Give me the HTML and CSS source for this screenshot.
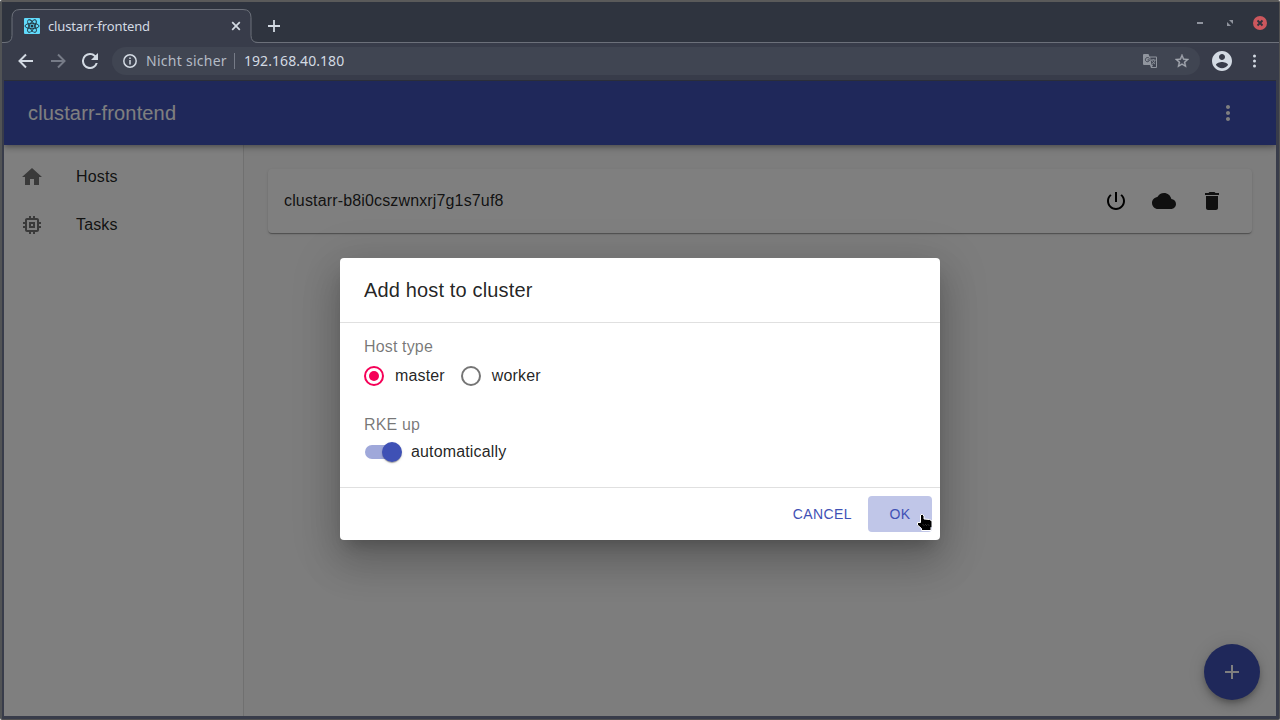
FILE: index.html
```html
<!DOCTYPE html>
<html lang="de">
<head>
<meta charset="utf-8">
<title>clustarr-frontend</title>
<link rel="stylesheet" href="styles.css">
</head>
<body>
<div class="window">
  <div class="tabstrip">
    <svg class="tab-shape" width="256" height="41" viewBox="0 0 256 41"><path d="M0 40.5h1q7 0 7-7V15.500q0-8 8-8h223q8 0 8 8V33.500q0 7 7 7h2V41H0z" fill="#383c4a"/><path d="M0 40.500h1q7 0 7-7V15.500q0-8 8-8h223q8 0 8 8V33.500q0 7 7 7h2" fill="none" stroke="#6c707a"/></svg>
    <div class="tab">
      <svg width="16" height="16" viewBox="0 0 16 16"><rect width="16" height="16" rx="1" fill="#61dafb"/><g fill="none" stroke="#20303a" stroke-width=".9"><ellipse cx="8" cy="8" rx="7" ry="2.700"/><ellipse cx="8" cy="8" rx="7" ry="2.700" transform="rotate(60 8 8)"/><ellipse cx="8" cy="8" rx="7" ry="2.700" transform="rotate(120 8 8)"/></g><circle cx="8" cy="8" r="1.500" fill="#20303a"/></svg>
      <span class="tab-title">clustarr-frontend</span>
      <svg width="10" height="10" viewBox="0 0 10 10"><path d="M1.200 1.200l7.600 7.600M8.800 1.200l-7.600 7.600" stroke="#d3dae3" stroke-width="1.700"/></svg>
    </div>
    <svg class="new-tab" width="12" height="12" viewBox="0 0 12 12"><path d="M6 0v12M0 6h12" stroke="#d3dae3" stroke-width="1.800"/></svg>
    <div class="controls">
      <svg width="6" height="14" viewBox="0 0 6 14"><path d="M0 7h6" stroke="#90949e" stroke-width="2"/></svg>
      <svg width="6" height="6" viewBox="0 0 6 6"><path d="M2 0h4v4zM0 2v4h4z" fill="#90949e"/></svg>
      <svg class="close" width="14" height="14" viewBox="0 0 14 14"><circle cx="7" cy="7" r="7" fill="#cc575d"/><path d="M4.500 4.500l5 5M9.500 4.500l-5 5" stroke="#2f343f" stroke-width="1.900"/></svg>
    </div>
  </div>
  <div class="toolbar">
    <svg class="nav" viewBox="0 0 16 16"><path d="M15 8H2M8 1.500L1.500 8 8 14.500" fill="none" stroke="#d3dae3" stroke-width="2"/></svg>
    <svg class="nav" viewBox="0 0 16 16"><path d="M1 8h13M8 1.500L14.500 8 8 14.500" fill="none" stroke="#767b87" stroke-width="2"/></svg>
    <svg class="nav" viewBox="4 4 16 16"><path d="M17.650 6.350A7.958 7.958 0 0 0 12 4a8 8 0 1 0 7.730 10h-2.080A6 6 0 1 1 12 6c1.660 0 3.140.69 4.220 1.780L13 11h7V4z" fill="#d3dae3"/></svg>
    <div class="omnibox">
      <svg class="info" width="14" height="14" viewBox="0 0 14 14"><circle cx="7" cy="7" r="6.200" fill="none" stroke="#d3dae3" stroke-width="1.500"/><path d="M7 6v4.500M7 3.500V5" stroke="#d3dae3" stroke-width="1.500"/></svg>
      <span class="insecure">Nicht sicher</span>
      <span class="address">192.168.40.180</span>
      <svg class="translate" width="14" height="14" viewBox="0 0 14 14"><path d="M1 0h4.500l1 2.500H13q1 0 1 1V13q0 1-1 1H8l-1-3H1q-1 0-1-1V1q0-1 1-1z" fill="#90959e"/><path d="M7.200 3.500H13V13H9l1-2-1.500-.3z" fill="#404552"/><path d="M6.500 4.500C5.500 3 2.400 3.200 2.400 5.700S6 8.500 6.500 5.900h-2" fill="none" stroke="#404552"/><path d="M8 6h4.500M10.200 5v1M8.700 6c.6 2 2 3 3.300 4M12 6c-.4 2-1.500 3.300-3.200 4.300" fill="none" stroke="#90959e" stroke-width=".9"/></svg>
      <svg width="14" height="14" viewBox="2 2 20 20"><path d="M22 9.240l-7.190-.62L12 2 9.190 8.630 2 9.240l5.460 4.730L5.820 21 12 17.270 18.180 21l-1.630-7.030L22 9.240zM12 15.400l-3.760 2.270 1-4.280-3.320-2.880 4.380-.38L12 6.100l1.710 4.040 4.380.38-3.320 2.880 1 4.280L12 15.400z" fill="#a4a9b1" stroke="#a4a9b1" stroke-width=".5"/></svg>
    </div>
    <svg class="avatar" width="20" height="20" viewBox="2 2 20 20"><path d="M12 2C6.480 2 2 6.480 2 12s4.480 10 10 10 10-4.480 10-10S17.520 2 12 2zm0 3c1.660 0 3 1.340 3 3s-1.340 3-3 3-3-1.340-3-3 1.340-3 3-3zm0 14.200c-2.500 0-4.710-1.280-6-3.220.03-1.990 4-3.080 6-3.080 1.990 0 5.970 1.090 6 3.080-1.290 1.940-3.500 3.220-6 3.220z" fill="#d3dae3"/></svg>
    <svg class="menu" width="4" height="14" viewBox="0 0 4 14"><g fill="#d3dae3"><circle cx="2.500" cy="2" r="1.500"/><circle cx="2.500" cy="7" r="1.500"/><circle cx="2.500" cy="12" r="1.500"/></g></svg>
  </div>
  <div class="page">
    <header class="appbar">
      <span>clustarr-frontend</span>
      <svg width="24" height="24" viewBox="0 0 24 24"><path d="M12 8c1.100 0 2-.9 2-2s-.9-2-2-2-2 .9-2 2 .9 2 2 2zm0 2c-1.100 0-2 .9-2 2s.9 2 2 2 2-.9 2-2-.9-2-2-2zm0 6c-1.100 0-2 .9-2 2s.9 2 2 2 2-.9 2-2-.9-2-2-2z" fill="#fff"/></svg>
    </header>
    <div class="body">
      <nav class="drawer">
        <div class="nav-item"><svg width="24" height="24" viewBox="0 0 24 24"><path d="M10 20v-6h4v6h5v-8h3L12 3 2 12h3v8z"/></svg><span>Hosts</span></div>
        <div class="nav-item"><svg width="24" height="24" viewBox="0 0 24 24"><path d="M15 9H9v6h6V9zm-2 4h-2v-2h2v2zm8-2V9h-2V7c0-1.100-.9-2-2-2h-2V3h-2v2h-2V3H9v2H7c-1.100 0-2 .9-2 2v2H3v2h2v2H3v2h2v2c0 1.100.9 2 2 2h2v2h2v-2h2v2h2v-2h2c1.100 0 2-.9 2-2v-2h2v-2h-2v-2h2zm-4 6H7V7h10v10z"/></svg><span>Tasks</span></div>
      </nav>
      <main class="content">
        <div class="card">
          <span>clustarr-b8i0cszwnxrj7g1s7uf8</span>
          <div class="card-actions">
            <svg width="24" height="24" viewBox="0 0 24 24"><path fill="#000" d="M13 3h-2v10h2V3zm4.830 2.170l-1.420 1.420C17.990 7.860 19 9.810 19 12c0 3.870-3.130 7-7 7s-7-3.130-7-7c0-2.190 1.010-4.140 2.580-5.420L6.170 5.170C4.230 6.820 3 9.260 3 12c0 4.970 4.030 9 9 9s9-4.030 9-9c0-2.740-1.230-5.180-3.170-6.830z"/></svg>
            <svg width="24" height="24" viewBox="0 0 24 24"><path d="M19.350 10.040C18.670 6.590 15.640 4 12 4 9.110 4 6.600 5.640 5.350 8.040 2.340 8.360 0 10.910 0 14c0 3.310 2.690 6 6 6h13c2.760 0 5-2.240 5-5 0-2.640-2.050-4.780-4.650-4.960z"/></svg>
            <svg width="24" height="24" viewBox="0 0 24 24"><path d="M6 19c0 1.100.9 2 2 2h8c1.100 0 2-.9 2-2V7H6v12zM19 4h-3.500l-1-1h-5l-1 1H5v2h14V4z"/></svg>
          </div>
        </div>
      </main>
    </div>
    <div class="fab"><svg width="24" height="24" viewBox="0 0 24 24"><path d="M19 13h-6v6h-2v-6H5v-2h6V5h2v6h6v2z" fill="#fff"/></svg></div>
    <div class="backdrop">
      <section class="dialog">
        <h2 class="dialog-title">Add host to cluster</h2>
        <div class="dialog-content">
          <div class="label">Host type</div>
          <div class="radios">
            <span class="radio selected"></span><span class="option">master</span>
            <span class="radio"></span><span class="option">worker</span>
          </div>
          <div class="label rke">RKE up</div>
          <div class="switch-row"><span class="track"><span class="thumb"></span></span><span>automatically</span></div>
        </div>
        <div class="dialog-actions">
          <span class="button">CANCEL</span>
          <span class="button focused">OK</span>
          <svg class="cursor" width="16" height="17" viewBox="0 0 16 17"><path d="M4 .5h1.500L7 2v3l5.500.5L15 7v5.500l-1 1v3H4.500v-2L.5 11V8.500h3V1z" fill="#000" stroke="#fff" stroke-width="1" stroke-linejoin="round"/><path d="M6 10.500l1 1m1.500-1l1 1m1.500-1l1 1" stroke="#777" stroke-width=".8"/></svg>
        </div>
      </section>
    </div>
  </div>
</div>
</body>
</html>
```
FILE: styles.css
```css
* { box-sizing: border-box; }
body { margin: 0; background: #fff; font-family: "Liberation Sans", Arial, sans-serif; }
svg { display: block; flex: none; }
.window { width: 1280px; height: 720px; overflow: hidden; display: flex; flex-direction: column; background: #383c4a; border: 1px solid #515151; border-top: 2px solid #5a5a5a; border-left: 2px solid #515355; border-radius: 2px; padding: 0 3px 3px 2px; }
.tabstrip { position: relative; height: 41px; flex: none; display: flex; align-items: center; margin: 0 -3px 0 -2px; padding: 0 12px 0 22px; background: #2f343f; border-bottom: 1px solid #6c707a; font-family: "Noto Sans", sans-serif; }
.tab-shape { position: absolute; left: 2px; top: 0; }
.tab { position: relative; display: flex; align-items: center; width: 217px; height: 36px; margin-top: 8px; }
.tab-title { flex: 1; margin-left: 8px; font-size: 13px; line-height: 18px; letter-spacing: -.14px; color: #d3dae3; }
.new-tab { margin: 8px 0 0 27px; }
.controls { display: flex; align-items: center; gap: 24px; margin: 2px 0 0 auto; }
.close { margin-left: -4px; }
.toolbar { height: 38px; flex: none; display: flex; align-items: center; padding: 0 20px 2px 14px; border-bottom: 1px solid #2b2e39; font-family: "Noto Sans", sans-serif; }
.nav { width: 16px; height: 16px; margin-right: 16px; }
.omnibox { width: 1088px; height: 28px; margin-left: -2px; border-radius: 14px; background: #404552; display: flex; align-items: center; padding: 0 11px; font-size: 14px; line-height: 20px; color: #d3dae3; }
.insecure { margin-left: 9px; padding-right: 7px; border-right: 1px solid #767b87; line-height: 16px; letter-spacing: .27px; color: #b4bbc5; }
.address { margin-left: 9px; letter-spacing: .07px; }
.translate { margin: 0 18px 0 auto; }
.avatar { margin-left: 12px; }
.menu { margin-left: auto; }
.page { position: relative; flex: 1; background: #fafafa; color: rgba(0,0,0,.87); overflow: hidden; display: flex; flex-direction: column; }
.appbar { position: relative; z-index: 1; height: 64px; flex: none; display: flex; align-items: center; justify-content: space-between; padding: 0 36px 0 24px; background: #3f51b5; color: #fff; font-size: 20px; letter-spacing: .15px; box-shadow: 0 2px 4px -1px rgba(0,0,0,.2), 0 4px 5px rgba(0,0,0,.14), 0 1px 10px rgba(0,0,0,.12); }
.body { flex: 1; display: flex; }
.drawer { width: 240px; background: #fff; border-right: 1px solid rgba(0,0,0,.12); padding-top: 8px; }
.nav-item { display: flex; align-items: center; height: 48px; padding-left: 16px; gap: 32px; font-size: 16px; letter-spacing: .15px; }
.nav-item svg { fill: rgba(0,0,0,.54); }
.content { flex: 1; padding: 24px; }
.card { height: 64px; background: #fff; border-radius: 4px; box-shadow: 0 2px 1px -1px rgba(0,0,0,.2), 0 1px 1px rgba(0,0,0,.14), 0 1px 3px rgba(0,0,0,.12); display: flex; align-items: center; justify-content: space-between; padding: 0 28px 0 16px; font-size: 16px; letter-spacing: .15px; }
.card-actions { display: flex; gap: 24px; }
.card-actions svg { fill: rgba(0,0,0,.87); }
.fab { position: absolute; right: 16px; bottom: 16px; width: 56px; height: 56px; border-radius: 50%; background: #3f51b5; display: flex; align-items: center; justify-content: center; box-shadow: 0 3px 5px -1px rgba(0,0,0,.2), 0 6px 10px rgba(0,0,0,.14), 0 1px 18px rgba(0,0,0,.12); }
.backdrop { position: absolute; inset: 0; z-index: 2; display: flex; align-items: center; justify-content: center; background: rgba(0,0,0,.5); }
.dialog { width: 600px; height: 282px; display: flex; flex-direction: column; background: #fff; border-radius: 4px; box-shadow: 0 11px 15px -7px rgba(0,0,0,.2), 0 24px 38px 3px rgba(0,0,0,.14), 0 9px 46px 8px rgba(0,0,0,.12); font-size: 16px; letter-spacing: .15px; }
.dialog-title { margin: 0; height: 64px; padding: 16px 24px; font-size: 20px; font-weight: 400; line-height: 32px; letter-spacing: .15px; }
.dialog-content { height: 166px; padding: 15px 24px 0; border: solid rgba(0,0,0,.12); border-width: 1px 0; }
.label { height: 18px; line-height: 18px; color: rgba(0,0,0,.54); }
.radios { display: flex; align-items: center; height: 40px; line-height: 24px; }
.radio { width: 20px; height: 20px; border: 2px solid #757575; border-radius: 50%; margin-right: 11px; display: flex; align-items: center; justify-content: center; }
.radio.selected { border-color: #f50057; }
.selected::after { content: ""; width: 10px; height: 10px; border-radius: 50%; background: #f50057; }
.option { margin-right: 16px; }
.rke { margin-top: 20px; }
.switch-row { display: flex; align-items: center; height: 36px; line-height: 24px; }
.track { width: 34px; height: 14px; border-radius: 7px; background: #9fa8da; margin: 0 12px 0 1px; display: flex; align-items: center; justify-content: flex-end; }
.thumb { flex: none; width: 20px; height: 20px; margin-right: -3px; border-radius: 50%; background: #3f51b5; box-shadow: 0 2px 1px -1px rgba(0,0,0,.2), 0 1px 1px rgba(0,0,0,.14), 0 1px 3px rgba(0,0,0,.12); }
.dialog-actions { position: relative; height: 52px; display: flex; align-items: center; justify-content: flex-end; gap: 8px; padding: 0 8px; }
.button { min-width: 64px; height: 36px; padding: 0 8px; border-radius: 4px; text-align: center; font-size: 14px; line-height: 36px; letter-spacing: .4px; color: #3f51b5; }
.focused { background: #c0c6e8; }
.cursor { position: absolute; right: 7px; top: 26px; }
```
